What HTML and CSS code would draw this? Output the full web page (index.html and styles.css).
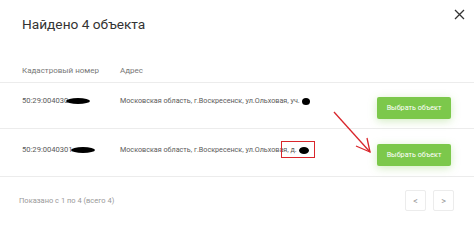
FILE: index.html
```html
<!DOCTYPE html>
<html lang="ru">
<head>
<meta charset="utf-8">
<link rel="stylesheet" href="styles.css">
</head>
<body>
<div class="modal">
  <div class="modal-head">
    <h1 class="title">Найдено 4 объекта</h1>
    <span class="close">
      <svg width="11" height="11" viewBox="0 0 11 11"><path d="M1 1L10 10M10 1L1 10" stroke="#333" stroke-width="1.3" fill="none"/></svg>
    </span>
  </div>
  <div class="row row-head">
    <div class="cell-num">Кадастровый номер</div>
    <div class="cell-addr">Адрес</div>
    <div class="cell-act"></div>
  </div>
  <div class="row row-1">
    <div class="cell-num">50:29:004030<span class="blot blot-a"></span></div>
    <div class="cell-addr">Московская область, г.Воскресенск, ул.Ольховая, уч.<span class="blot blot-b"></span></div>
    <div class="cell-act"><button class="pick">Выбрать объект</button></div>
  </div>
  <div class="row row-2">
    <div class="cell-num">50:29:0040301<span class="blot blot-a"></span></div>
    <div class="cell-addr">Московская область, г.Воскресенск, ул.Ольхова<span class="mark">я, д.<span class="blot blot-c"></span></span></div>
    <div class="cell-act"><button class="pick">Выбрать объект</button></div>
  </div>
  <div class="foot">
    <div class="shown">Показано с 1 по 4 (всего 4)</div>
    <div class="pager">
      <span class="pg">&lt;</span>
      <span class="pg">&gt;</span>
    </div>
  </div>
  <svg class="arrow" width="60" height="60" viewBox="0 0 60 60">
    <path d="M3 3L39 43" stroke="#d9262c" stroke-width="1.3" fill="none"/>
    <path d="M25 37L39 43L36 29" stroke="#d9262c" stroke-width="1.3" fill="none"/>
  </svg>
</div>
</body>
</html>
```

FILE: styles.css
```css
* { box-sizing: border-box; }
html, body { margin: 0; padding: 0; background: #fff; }
body { font-family: Roboto, "Open Sans", sans-serif; color: #555; }
.modal { position: relative; width: 474px; height: 230px; }
.modal-head { display: flex; justify-content: space-between; align-items: flex-start; padding: 0 9px 0 22px; height: 56px; }
.title { margin: 0; padding-top: 14px; font-size: 13.7px; font-weight: 400; color: #333; line-height: 20px; }
.close { display: block; padding-top: 9px; line-height: 0; }
.row { display: grid; grid-template-columns: 98px 257px 1fr; align-items: center; padding: 0 22px; border-bottom: 1px solid #ececec; font-size: 7.2px; color: #5a5a5a; }
.row-head { height: 27px; color: #777; align-items: start; padding-top: 10px; font-size: 8px; }
.row-1 { height: 46px; }
.row-2 { height: 48px; }
.row .cell-num, .row .cell-addr { position: relative; }
.row .cell-num { font-size: 7.6px; }
.row-head .cell-num { font-size: 8px; }
.row-1 .cell-num, .row-1 .cell-addr { top: -5px; }
.row-2 .cell-num, .row-2 .cell-addr { top: -3px; }
.cell-act { display: flex; justify-content: flex-end; padding-right: 2px; }
.pick { width: 74px; height: 22px; border: 0; border-radius: 2px; background: #7cc84b; color: #fff; font-family: inherit; font-size: 7.2px; box-shadow: 0 2px 8px rgba(124, 200, 75, 0.35); padding: 0; }
.row-1 .pick { margin-top: 4px; }
.row-2 .pick { margin-top: 4px; }
.blot { display: inline-block; background: #000; border-radius: 50%; vertical-align: middle; }
.blot-a { width: 24px; height: 6px; margin-left: -2px; }
.blot-b { width: 8px; height: 7px; margin-left: 2px; }
.blot-c { width: 10px; height: 7px; margin-left: 2px; }
.mark { position: relative; }
.mark::after { content: ""; position: absolute; left: -2px; right: -6px; top: -4px; bottom: -4px; border: 1.5px solid #d9262c; }
.foot { display: flex; justify-content: space-between; align-items: center; padding: 13px 20px 0 19px; }
.shown { font-size: 7.5px; color: #999; }
.pager { display: flex; gap: 7px; }
.pg { display: flex; align-items: center; justify-content: center; width: 21px; height: 21px; border: 1px solid #ececec; border-radius: 2px; font-size: 9px; color: #999; }
.arrow { position: absolute; left: 331px; top: 109px; }
```
